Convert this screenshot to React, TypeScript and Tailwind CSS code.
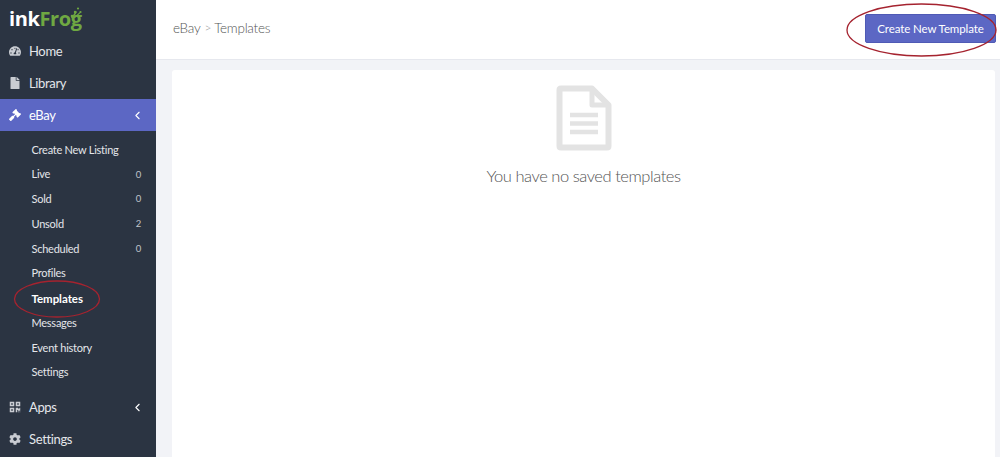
import { ChevronLeft } from 'lucide-react';
import { FaCog, FaFile, FaGavel, FaQrcode, FaTachometerAlt } from 'react-icons/fa';

const subItems = [
  { label: 'Create New Listing' },
  { label: 'Live', count: 0 },
  { label: 'Sold', count: 0 },
  { label: 'Unsold', count: 2 },
  { label: 'Scheduled', count: 0 },
  { label: 'Profiles' },
  { label: 'Templates', active: true },
  { label: 'Messages' },
  { label: 'Event history' },
  { label: 'Settings' }
];

function NavRow({ icon, label, active, chevron }: any) {
  return (
    <div
      className={`flex h-8 items-center pl-[9px] pr-[14px] text-[13px] tracking-[-0.35px] ${
        active ? 'bg-[#5c67c4] text-white' : 'text-[#e4e6ea]'
      }`}
    >
      <span className={`flex w-5 justify-start text-[12px] ${active ? 'text-white' : 'text-[#c9ccd2]'}`}>
        {icon}
      </span>
      <span className="flex-1 pt-[1px]">{label}</span>
      {chevron && <ChevronLeft size={13} strokeWidth={2} className="mr-[-2px] text-white" />}
    </div>
  );
}

function Logo() {
  return (
    <div className="relative flex h-[35px] items-start pl-[9px] pt-[4px] font-['Open_Sans',sans-serif] text-[20px] font-bold leading-[30px] tracking-[-0.4px]">
      <span className="text-white">ink</span>
      <span className="text-[#6fa842]">Frog</span>
      <svg width="12" height="12" viewBox="0 0 12 12" className="absolute left-[70px] top-[7px]">
        <g fill="#6fa842">
          <circle cx="2" cy="9" r="1.3" />
          <circle cx="5" cy="5" r="1.2" />
          <circle cx="8" cy="1.5" r="1.1" />
          <circle cx="10.5" cy="5" r="1.1" />
          <path d="M1 11 L6 4 L7 5 L3 11 Z" />
          <path d="M3 11 L10 5 L10.5 6 L5 11 Z" />
        </g>
      </svg>
    </div>
  );
}

function Sidebar() {
  return (
    <aside className="flex h-full w-[156px] shrink-0 flex-col bg-[#2b3442]">
      <Logo />
      <NavRow icon={<FaTachometerAlt />} label="Home" />
      <NavRow icon={<FaFile />} label="Library" />
      <NavRow icon={<FaGavel />} label="eBay" active chevron />
      <div className="flex flex-col pb-[6px] pt-[6.5px]">
        {subItems.map((item) => (
          <div
            key={item.label}
            className={`flex h-[24.75px] items-center pl-[31.5px] pr-[15px] ${
              item.active
                ? 'text-[11.5px] font-bold tracking-[-0.05px] text-white'
                : 'text-[11px] tracking-[-0.25px] text-[#e4e6ea]'
            }`}
          >
            <span className="flex-1">{item.label}</span>
            {item.count !== undefined && (
              <span className="text-[9.5px] text-[#c0c4cb]">{item.count}</span>
            )}
          </div>
        ))}
      </div>
      <NavRow icon={<FaQrcode />} label="Apps" chevron />
      <NavRow icon={<FaCog />} label="Settings" />
    </aside>
  );
}

function EmptyIcon() {
  return (
    <svg width="56" height="66" viewBox="0 0 56 66" fill="none">
      <path
        d="M5 3.5 H36 L52.5 20 V61 Q52.5 62.5 51 62.5 H5 Q3.5 62.5 3.5 61 V5 Q3.5 3.5 5 3.5 Z"
        stroke="#e3e3e3"
        strokeWidth="6"
        strokeLinejoin="round"
      />
      <path d="M36 3.5 V20 H52.5" stroke="#e3e3e3" strokeWidth="5" strokeLinejoin="round" />
      <path d="M14 30 H42 M14 38.5 H42 M14 47 H42" stroke="#e3e3e3" strokeWidth="4.5" />
    </svg>
  );
}

export default function App() {
  return (
    <div className="relative flex h-[457px] w-[1000px] overflow-hidden bg-[#f2f3f7] font-['Lato',sans-serif]">
      <Sidebar />
      <div className="flex min-w-0 flex-1 flex-col">
        <header className="flex h-[60px] shrink-0 items-center justify-between border-b border-[#e6e8ee] bg-white pb-[3px] pl-[17px] pr-[4px]">
          <div className="flex items-center text-[13.5px] font-light tracking-[-0.25px] text-[#555]">
            <span>eBay</span>
            <span className="mx-[4px] text-[12px] text-[#999]">&gt;</span>
            <span className="-ml-[1px]">Templates</span>
          </div>
          <button
            type="button"
            className="mt-[1px] h-[29px] w-[131px] rounded-[2px] border border-[#4f5ab5] bg-[#5c67c4] text-[11.5px] tracking-[-0.1px] text-white"
          >
            Create New Template
          </button>
        </header>
        <div className="flex-1 pl-[16px] pr-[5px] pt-[10px]">
          <div className="flex h-full flex-col items-center rounded-t-[3px] bg-white pt-[15px]">
            <EmptyIcon />
            <p className="mt-[13px] text-[16.5px] font-light leading-[24px] tracking-[-0.45px] text-[#555]">
              You have no saved templates
            </p>
          </div>
        </div>
      </div>

      {/* red hand drawn circles */}
      <svg width="1000" height="457" className="pointer-events-none absolute left-0 top-0" fill="none">
        <ellipse cx="57" cy="299" rx="42.5" ry="18" stroke="#a5232f" strokeWidth="1.3" />
        <ellipse cx="921.5" cy="30" rx="74.5" ry="26" stroke="#a5232f" strokeWidth="1.3" />
      </svg>
    </div>
  );
}
